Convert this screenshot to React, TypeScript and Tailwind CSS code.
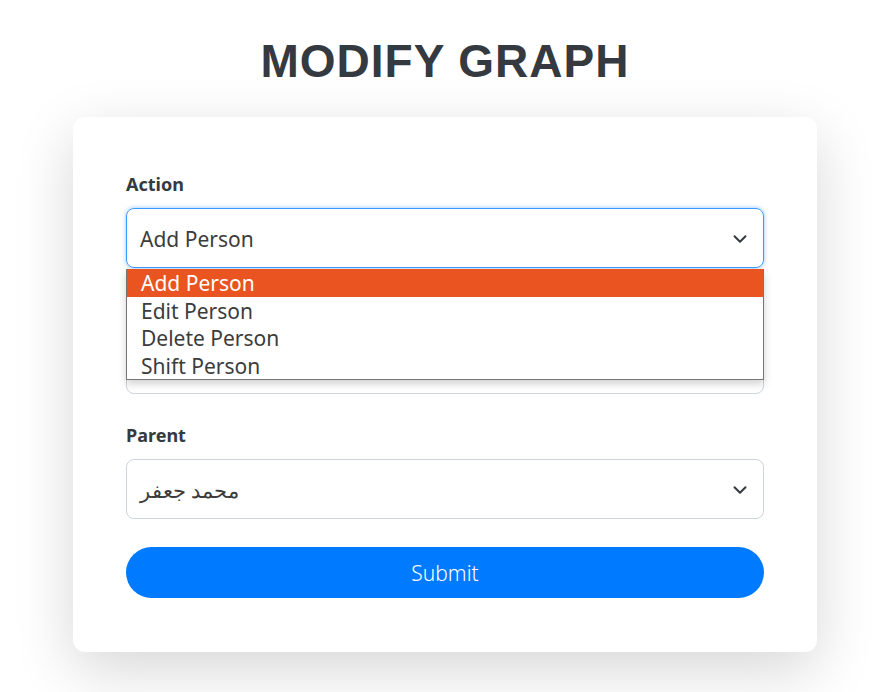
import { ChevronDown } from "lucide-react";

const actions = ["Add Person", "Edit Person", "Delete Person", "Shift Person"];

const App = () => {
  return (
    <div className="min-h-[692px] bg-white pl-[9px] pt-[34px] font-['Noto_Sans',sans-serif] text-[#343a40]">
      {/* Title */}
      <h1 className="mb-[28px] text-center font-['Liberation_Sans',Arial,sans-serif] text-[46px] font-bold leading-[55px] tracking-[1px] text-[#343a40]">
        MODIFY GRAPH
      </h1>

      {/* Card */}
      <div className="mx-auto w-[744px] rounded-[12px] bg-white px-[53px] pt-[53px] pb-[54px] shadow-[0_18px_60px_rgba(0,0,0,0.16)]">
        {/* Action */}
        <div className="relative mb-[27.5px]">
          <label className="mb-[11px] block pt-[1px] text-[18px] font-bold leading-[26px]">Action</label>
          <div className="flex h-[60px] items-center justify-between rounded-[8px] border border-[#3d9bff] pl-[13px] pr-[12px] text-[21px] text-[#3c3c3c] shadow-[0_0_4px_rgba(0,123,255,0.45)]">
            <span className="mt-[4px]">Add Person</span>
            <ChevronDown size={22} strokeWidth={2.2} className="mt-[1px] text-[#343a40]" />
          </div>

          {/* Open list */}
          <ul className="absolute left-0 right-0 top-[99px] z-10 border-x border-b border-[#767676] bg-white text-[21px] shadow-[0_4px_8px_rgba(0,0,0,0.18)]">
            {actions.map((a, i) => (
              <li
                key={a}
                className={
                  i === 0
                    ? "h-[27.5px] bg-[#e95420] pl-[14px] pt-[2px] leading-[25.5px] text-white"
                    : "h-[27.5px] pl-[14px] pt-[2px] leading-[25.5px] text-[#3c3c3c]"
                }
              >
                {a}
              </li>
            ))}
          </ul>
        </div>

        {/* Field hidden behind the open list */}
        <div className="mb-[27.5px]">
          <label className="invisible mb-[11px] block text-[18px] font-bold leading-[27px]">Name</label>
          <div className="h-[60px] rounded-[8px] border border-[#ced4da]" />
        </div>

        {/* Parent */}
        <div className="mb-[28px]">
          <label className="mb-[11px] block pt-[1px] text-[18px] font-bold leading-[26px]">Parent</label>
          <div className="flex h-[60px] items-center justify-between rounded-[8px] border border-[#ced4da] pl-[13px] pr-[12px] text-[21px] text-[#3c3c3c]">
            <span className="mt-[4px]">محمد جعفر</span>
            <ChevronDown size={22} strokeWidth={2.2} className="mt-[1px] text-[#343a40]" />
          </div>
        </div>

        <button className="flex h-[51px] w-full items-center justify-center rounded-full bg-[#007bff] pt-[3px] text-[21px] font-light text-white">
          Submit
        </button>
      </div>
    </div>
  );
};

export default App;
